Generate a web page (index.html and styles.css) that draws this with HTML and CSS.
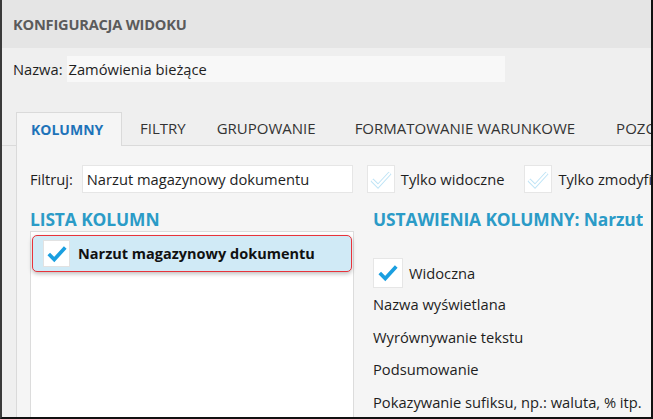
FILE: index.html
```html
<!DOCTYPE html>
<html lang="pl">
<head>
    <meta charset="UTF-8">
    <link rel="stylesheet" href="styles.css">
    <title>Konfiguracja widoku</title>
</head>
<body>
    <div class="window">
        <div class="header">
            <h1>KONFIGURACJA WIDOKU</h1>
        </div>
        <div class="name-row">
            <label>Nazwa:</label>
            <div class="name-input">Zamówienia bieżące</div>
        </div>
        <div class="tabs">
            <div class="tab active">KOLUMNY</div>
            <div class="tab tab-filtry">FILTRY</div>
            <div class="tab tab-grup">GRUPOWANIE</div>
            <div class="tab tab-format">FORMATOWANIE WARUNKOWE</div>
            <div class="tab tab-pozo">POZOSTAŁE</div>
        </div>
        <div class="panel">
            <div class="filter-row">
                <label>Filtruj:</label>
                <div class="filter-input">Narzut magazynowy dokumentu</div>
                <div class="check-item first">
                    <span class="box">
                        <svg width="24" height="24" viewBox="0 0 24 24"><path d="M3 13 L9 19 L21 6" fill="none" stroke="#bfe4f6" stroke-width="4" stroke-linejoin="miter"/><path d="M3 13 L9 19 L21 6" fill="none" stroke="#fff" stroke-width="2"/></svg>
                    </span>
                    <span>Tylko widoczne</span>
                </div>
                <div class="check-item">
                    <span class="box">
                        <svg width="24" height="24" viewBox="0 0 24 24"><path d="M3 13 L9 19 L21 6" fill="none" stroke="#bfe4f6" stroke-width="4" stroke-linejoin="miter"/><path d="M3 13 L9 19 L21 6" fill="none" stroke="#fff" stroke-width="2"/></svg>
                    </span>
                    <span>Tylko zmodyfikowane</span>
                </div>
            </div>
            <div class="columns">
                <div class="col-list">
                    <h2>LISTA KOLUMN</h2>
                    <div class="list-box">
                        <div class="list-item">
                            <span class="box">
                                <svg width="22" height="22" viewBox="0 0 24 24"><path d="M3 12 L9 18 L21 5" fill="none" stroke="#1a9fe0" stroke-width="4"/></svg>
                            </span>
                            <span>Narzut magazynowy dokumentu</span>
                        </div>
                    </div>
                </div>
                <div class="col-settings">
                    <h2>USTAWIENIA KOLUMNY: Narzut</h2>
                    <div class="check-row">
                        <span class="box">
                            <svg width="22" height="22" viewBox="0 0 24 24"><path d="M3 12 L9 18 L21 5" fill="none" stroke="#1a9fe0" stroke-width="4"/></svg>
                        </span>
                        <span>Widoczna</span>
                    </div>
                    <div class="setting">Nazwa wyświetlana</div>
                    <div class="setting">Wyrównywanie tekstu</div>
                    <div class="setting">Podsumowanie</div>
                    <div class="setting">Pokazywanie sufiksu, np.: waluta, % itp.</div>
                </div>
            </div>
        </div>
    </div>
</body>
</html>
```

FILE: styles.css
```css
* {
    margin: 0;
    padding: 0;
    box-sizing: border-box;
}

body {
    font-family: "Open Sans", "Noto Sans", sans-serif;
    font-size: 14.7px;
    color: #1e1e1e;
    background-color: #fff;
}

.window {
    width: 653px;
    height: 419px;
    overflow: hidden;
    background-color: #efefef;
    border-left: 2px solid #3a3a3a;
    border-right: 2px solid #111;
    border-bottom: 2px solid #111;
    display: flex;
    flex-direction: column;
}

.header {
    height: 48px;
    flex-shrink: 0;
    background-color: #e5e5e5;
    padding-left: 11px;
    display: flex;
    align-items: center;
}

.header h1 {
    font-size: 14.6px;
    font-weight: 700;
    color: #5b5b5b;
    letter-spacing: -0.2px;
}

.name-row {
    margin-top: 8px;
    padding-left: 11px;
    display: flex;
    align-items: center;
    height: 26px;
    flex-shrink: 0;
    white-space: nowrap;
}

.name-input {
    flex-shrink: 0;
    margin-left: 4px;
    width: 438px;
    height: 26px;
    line-height: 26px;
    padding-left: 2px;
    background-color: #f8f8f8;
}

.tabs {
    margin-top: 30px;
    padding-left: 14px;
    display: flex;
    height: 34px;
    flex-shrink: 0;
    border-bottom: 1px solid #dadada;
    white-space: nowrap;
    font-size: 15px;
}

.tab {
    flex-shrink: 0;
    height: 33px;
    line-height: 33px;
    color: #333;
}

.tab.active {
    width: 106px;
    padding-left: 14px;
    background-color: #f5f5f5;
    border: 1px solid #dadada;
    border-bottom: none;
    height: 34px;
    font-size: 14px;
    font-weight: 700;
    color: #1e73b9;
}

.tab-filtry {
    margin-left: 18px;
}

.tab-grup {
    margin-left: 31px;
}

.tab-format {
    margin-left: 39px;
}

.tab-pozo {
    margin-left: 41px;
}

.panel {
    flex: 1;
    margin-left: 14px;
    background-color: #f5f5f5;
    border-left: 1px solid #dadada;
    padding-left: 13px;
    display: flex;
    flex-direction: column;
    min-height: 0;
}

.filter-row {
    margin-top: 19px;
    display: flex;
    align-items: center;
    height: 28px;
    white-space: nowrap;
}

.filter-input {
    flex-shrink: 0;
    margin-left: 9px;
    width: 271px;
    height: 28px;
    line-height: 26px;
    padding-left: 4px;
    background-color: #fff;
    border: 1px solid #e6e6e6;
}

.box {
    width: 28px;
    height: 28px;
    background-color: #fff;
    border: 1px solid #e6e6e6;
    display: flex;
    align-items: center;
    justify-content: center;
    flex-shrink: 0;
}

.check-item {
    flex-shrink: 0;
    display: flex;
    align-items: center;
    gap: 6px;
    margin-left: 20px;
}

.check-item.first {
    margin-left: 14px;
}

.columns {
    flex: 1;
    display: flex;
    margin-top: 15px;
    min-height: 0;
}

h2 {
    font-size: 17.4px;
    font-weight: 700;
    color: #2b9bc7;
    line-height: 22px;
    white-space: nowrap;
    letter-spacing: -0.1px;
}

.col-list {
    width: 324px;
    flex-shrink: 0;
    display: flex;
    flex-direction: column;
}

.list-box {
    flex: 1;
    margin-top: 1px;
    background-color: #fff;
    border: 1px solid #dcdcdc;
    border-bottom: none;
    padding: 3px 1px;
}

.list-item {
    height: 37px;
    display: flex;
    align-items: center;
    gap: 8px;
    padding-left: 10px;
    background-color: #d0eaf6;
    border: 1.5px solid #e8333b;
    border-radius: 5px;
    box-shadow: 0 2px 4px rgba(0, 0, 0, 0.25);
    font-weight: 700;
    font-size: 14.5px;
    color: #111;
    white-space: nowrap;
}

.list-item .box {
    width: 27px;
    height: 27px;
    border-color: #e2e2e2;
}

.col-settings {
    padding-left: 19px;
    overflow: hidden;
    min-width: 0;
}

.col-settings h2 {
    margin-bottom: 28px;
}

.setting {
    height: 32.5px;
    line-height: 32.5px;
    white-space: nowrap;
}

.check-row {
    height: 30px;
    display: flex;
    align-items: center;
    gap: 6px;
}

.check-row .box {
    width: 30px;
    height: 30px;
}
```
